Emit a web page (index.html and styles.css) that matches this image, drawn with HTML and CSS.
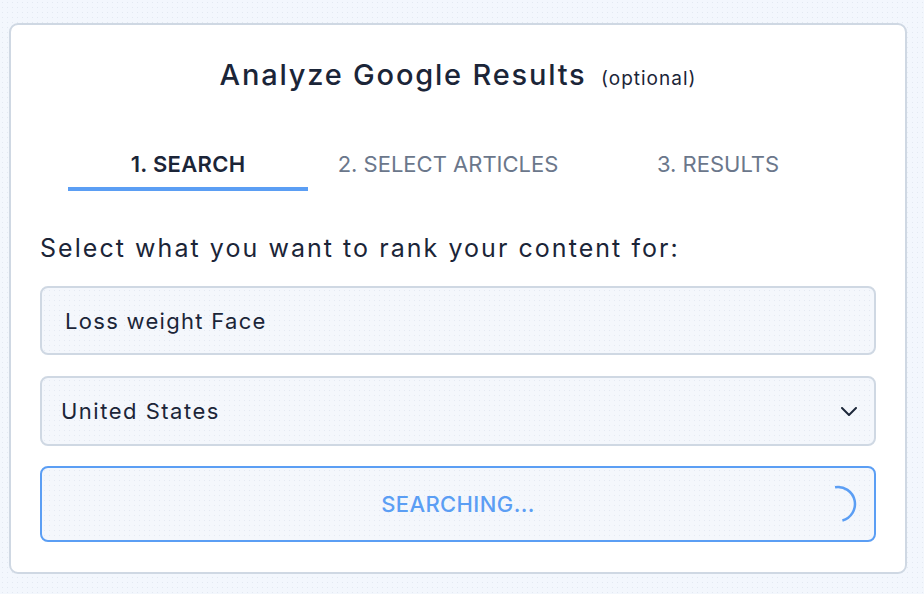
FILE: index.html
```html
<!DOCTYPE html>
<html lang="en">
<head>
<meta charset="utf-8">
<title>Analyze Google Results</title>
<link rel="stylesheet" href="styles.css">
</head>
<body>
<div class="card">
  <h1 class="title">Analyze Google Results <span class="optional">(optional)</span></h1>
  <div class="tabs">
    <div class="tab active">1. SEARCH</div>
    <div class="tab">2. SELECT ARTICLES</div>
    <div class="tab">3. RESULTS</div>
  </div>
  <p class="label">Select what you want to rank your content for:</p>
  <div class="field input">Loss weight Face</div>
  <div class="field select">
    <span>United States</span>
    <svg class="chevron" width="16" height="9" viewBox="0 0 16 9"><path d="M1 1 L8 8 L15 1" fill="none" stroke="#1e293b" stroke-width="2" stroke-linecap="round" stroke-linejoin="round"/></svg>
  </div>
  <div class="button">
    <span></span>
    <span class="btn-text">SEARCHING...</span>
    <svg class="spinner" width="40" height="40" viewBox="0 0 40 40"><path d="M17.05 3.26 A17 17 0 0 1 24.4 36.42" fill="none" stroke="#5b9ef4" stroke-width="2.5"/></svg>
  </div>
</div>
</body>
</html>
```
FILE: styles.css
```css
* { box-sizing: border-box; }
html, body { margin: 0; padding: 0; }
body {
  font-family: "Inter", "Liberation Sans", sans-serif;
  background-color: #f3f7fd;
  background-image: radial-gradient(#e3e9f2 0.5px, transparent 0.7px);
  background-size: 5px 5px;
  width: 924px;
  height: 594px;
  overflow: hidden;
  padding: 23px 0 0 9px;
  color: #1e293b;
}
.card {
  width: 898px;
  height: 551px;
  background: #ffffff;
  border: 2px solid #cfd8e3;
  border-radius: 9px;
  padding: 33px 29px 0 29px;
}
.title {
  margin: 0;
  text-align: center;
  font-size: 29px;
  line-height: 34px;
  font-weight: 500;
  color: #1b2538;
  letter-spacing: 1.8px;
}
.optional {
  font-size: 19px;
  font-weight: 400;
  margin-left: 5px;
  letter-spacing: 1px;
}
.tabs {
  display: grid;
  grid-template-columns: 240px 280px 260px;
  margin: 56px 0 0 28px;
}
.tab {
  text-align: center;
  font-size: 22px;
  line-height: 24px;
  padding-bottom: 11px;
  border-bottom: 4px solid transparent;
  color: #6b778b;
  font-weight: 400;
  letter-spacing: 0;
}
.tab.active {
  color: #1b2538;
  font-weight: 600;
  border-bottom-color: #5b9ef4;
  letter-spacing: 0.3px;
}
.label {
  margin: 42px 0 0 0;
  font-size: 25px;
  line-height: 30px;
  color: #1b2538;
  letter-spacing: 2.05px;
}
.field {
  margin-top: 23px;
  height: 69px;
  border: 2px solid #cfd8e3;
  border-radius: 8px;
  background-color: #f4f7fc;
  background-image: radial-gradient(#e5eaf3 0.5px, transparent 0.7px);
  background-size: 5px 5px;
  font-size: 22px;
  color: #1b2538;
  display: flex;
  align-items: center;
  letter-spacing: 1.3px;
}
.input { padding-left: 23px; }
.select {
  margin-top: 21px;
  height: 70px;
  padding: 0 17px 0 19px;
  justify-content: space-between;
  letter-spacing: 1.5px;
}
.chevron { display: block; }
.button {
  margin-top: 20px;
  height: 76px;
  border: 2px solid #5b9ef4;
  border-radius: 8px;
  background-color: #f4f7fc;
  background-image: radial-gradient(#e5eaf3 0.5px, transparent 0.7px);
  background-size: 5px 5px;
  display: grid;
  grid-template-columns: 1fr auto 1fr;
  align-items: center;
  padding-right: 16px;
  padding-left: 16px;
}
.btn-text {
  font-size: 22px;
  font-weight: 500;
  color: #5b9ef4;
  letter-spacing: 0.4px;
}
.spinner { justify-self: end; display: block; }
```
